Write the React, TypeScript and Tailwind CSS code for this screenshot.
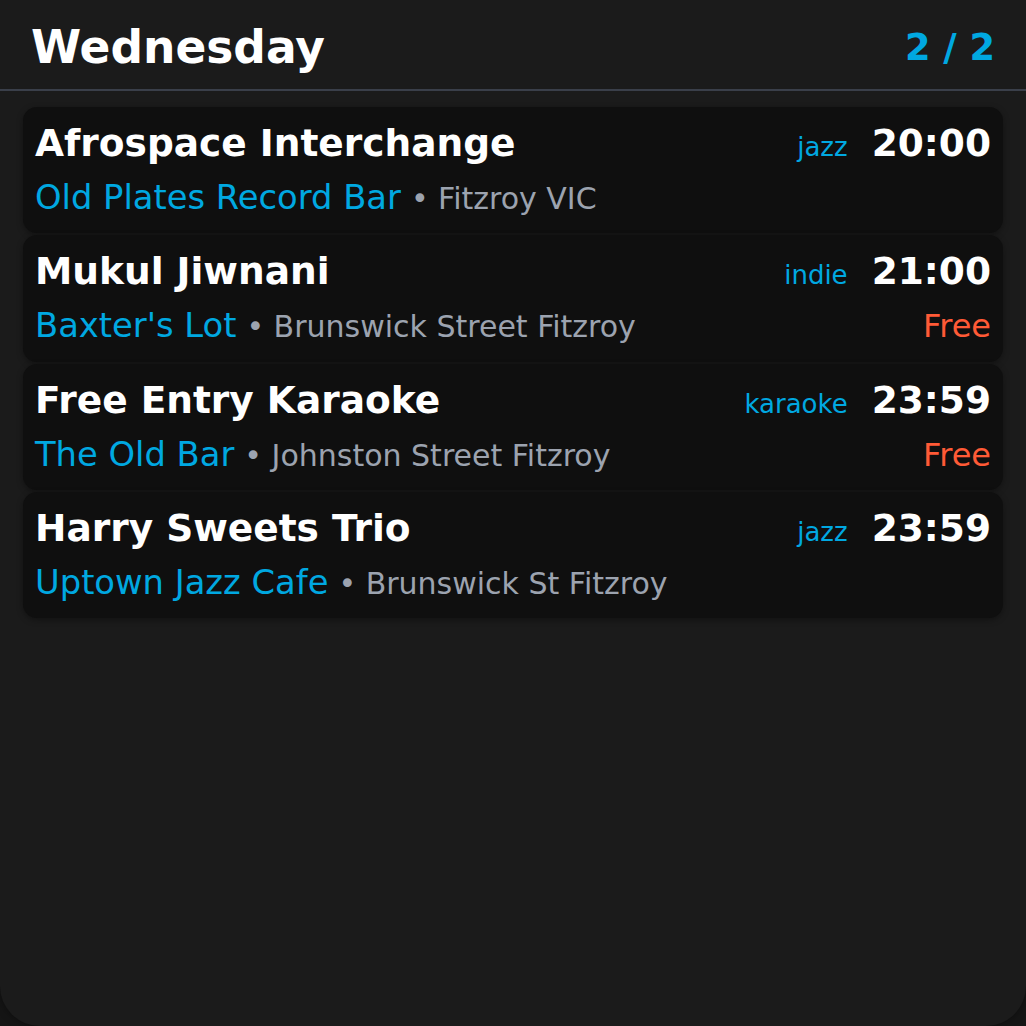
const EVENTS = [
  { title: "Afrospace Interchange", tag: "jazz", time: "20:00", venue: "Old Plates Record Bar", place: "Fitzroy VIC", free: false },
  { title: "Mukul Jiwnani", tag: "indie", time: "21:00", venue: "Baxter's Lot", place: "Brunswick Street Fitzroy", free: true },
  { title: "Free Entry Karaoke", tag: "karaoke", time: "23:59", venue: "The Old Bar", place: "Johnston Street Fitzroy", free: true },
  { title: "Harry Sweets Trio", tag: "jazz", time: "23:59", venue: "Uptown Jazz Cafe", place: "Brunswick St Fitzroy", free: false },
];

type Ev = (typeof EVENTS)[number];

function EventCard({ ev }: { ev: Ev }) {
  return (
    <div className="rounded-[14px] bg-[#0f0f0f] px-[12px] pt-[15px] pb-[16px] shadow-[0_2px_6px_rgba(0,0,0,0.35)]">
      <div className="flex items-baseline justify-between">
        <span className="text-[37.5px] font-bold text-white leading-[1.164]">{ev.title}</span>
        <div className="flex items-baseline gap-[24px]">
          <span className="text-[26px] text-[#00a8e1]">{ev.tag}</span>
          <span className="text-[37.5px] font-bold text-white leading-[1.164]">{ev.time}</span>
        </div>
      </div>
      <div className="mt-[11px] flex items-baseline justify-between leading-[1.164]">
        <div className="flex items-baseline">
          <span className="text-[33.75px] text-[#00a8e1]">{ev.venue}</span>
          <span className="ml-[10px] text-[30px] text-[#9ca3af]">• {ev.place}</span>
        </div>
        {ev.free && <span className="text-[32px] text-[#ff5a36]">Free</span>}
      </div>
    </div>
  );
}

export default function App() {
  return (
    <div className="w-[1026px] h-[1026px] bg-[#151515]" style={{ fontFamily: '"DejaVu Sans", sans-serif' }}>
      <div className="h-full rounded-b-[40px] bg-[#1b1b1b] shadow-[0_0_8px_rgba(0,0,0,0.4)]">
        <div className="flex h-[91px] items-center justify-between px-[31px] pt-[7px] border-b-2 border-[#3a3f4a]">
          <h1 className="text-[45.5px] font-bold text-white leading-[1.164]">Wednesday</h1>
          <span className="text-[36.7px] font-bold text-[#00a8e1]">2 / 2</span>
        </div>
        <div className="flex flex-col gap-[2px] px-[23px] pt-[16px]">
          {EVENTS.map((ev, i) => (
            <EventCard key={i} ev={ev} />
          ))}
        </div>
      </div>
    </div>
  );
}
